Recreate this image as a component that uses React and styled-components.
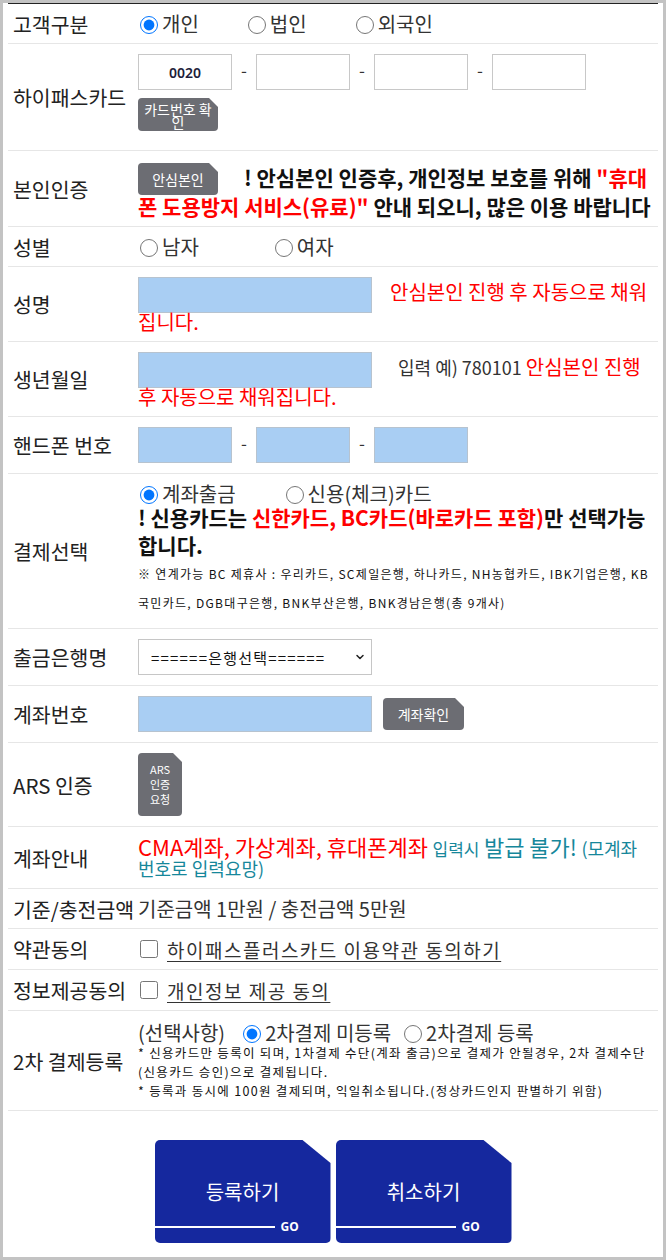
import React from 'react';
import styled, { createGlobalStyle } from 'styled-components';
import { ChevronDown } from 'lucide-react';

const colors = {
  frame: '#c3c3c3',
  rule: '#e6e6e6',
  label: '#222222',
  text: '#333333',
  red: '#ff0000',
  teal: '#16879b',
  field: '#a9cef3',
  fieldBorder: '#b7c3cf',
  gray: '#6c6d73',
  blue: '#15289e',
};

const font = '"Noto Sans CJK KR", "Noto Sans", sans-serif';

const GlobalStyle = createGlobalStyle`
  html, body {
    margin: 0;
    padding: 0;
    background: #fff;
  }

  body {
    font-family: ${font};
    color: ${colors.label};
  }

  *,
  *:before,
  *:after {
    box-sizing: border-box;
  }
`;

const Page = styled.div`
  min-height: 100vh;
  border: 3px solid ${colors.frame};
  padding: 0 5px 14px;
  background: #fff;
`;

const Table = styled.div`
  border-top: 1px solid #222;
`;

const Row = styled.div`
  display: grid;
  grid-template-columns: 125px 1fr;
  border-bottom: 1px solid ${colors.rule};
`;

const Label = styled.div`
  display: flex;
  align-items: center;
  padding-left: 5px;
  font-size: 20.5px;
  line-height: 22px;
  white-space: nowrap;
  color: ${colors.label};
`;

const Cell = styled.div`
  min-width: 0;
  padding: ${p => p.$pad || '10px 3px 10px 5px'};
  font-size: 20px;
  line-height: ${p => p.$lh || '19px'};
  color: ${colors.text};
`;

const Options = styled.div`
  display: flex;
  align-items: center;
  gap: ${p => p.$gap || 47}px;
  height: ${p => p.$h || 19}px;
`;

const Option = styled.label`
  display: inline-flex;
  align-items: center;
  gap: 4px;
  font-size: 20px;
  color: ${colors.text};
  white-space: nowrap;
`;

const Radio = styled.input.attrs({ type: 'radio' })`
  width: 18px;
  height: 18px;
  margin: 3px 0 0 2px;
`;

const FieldLine = styled.div`
  display: flex;
  align-items: center;
`;

const Field = styled.input`
  display: inline-block;
  vertical-align: middle;
  width: ${p => p.$w || 94}px;
  height: 36px;
  margin: 0 ${p => p.$mr || 0}px 0 0;
  padding: 0 6px;
  border: 1px solid ${p => (p.$fill ? colors.fieldBorder : '#c8c8c8')};
  background: ${p => (p.$fill ? colors.field : '#fff')};
  font: 600 14px "Noto Sans", sans-serif;
  color: #1d1d3a;
  text-align: center;
  outline: none;
`;

const Dash = styled.span`
  width: 24px;
  text-align: center;
  font-size: 17px;
  line-height: 16px;
  margin-top: -5px;
  color: ${colors.text};
`;

const GrayButton = styled.button`
  display: inline-flex;
  align-items: center;
  justify-content: center;
  vertical-align: ${p => p.$va || 'middle'};
  width: ${p => p.$w}px;
  height: ${p => p.$h}px;
  margin: ${p => p.$m || 0};
  padding: ${p => p.$pt || 0}px 5px 0;
  border: 0;
  border-radius: 4px;
  background: ${colors.gray};
  color: #fff;
  font-family: ${font};
  font-size: ${p => p.$fs || 14}px;
  line-height: ${p => p.$lh || 14}px;
  text-align: center;
  clip-path: polygon(0 0, calc(100% - 9px) 0, 100% 9px, 100% 100%, 0 100%);
  cursor: pointer;
`;

const Strong = styled.span`
  font-size: 21px;
  font-weight: 700;
  color: #111;
`;

const Notice = styled.p`
  margin: 0;
  font-size: 21px;
  font-weight: 700;
  line-height: 28px;
  color: #111;
`;

const Red = styled.span`
  color: ${colors.red};
  font-size: ${p => (p.$fs ? `${p.$fs}px` : 'inherit')};
`;

const Teal = styled.span`
  color: ${colors.teal};
  font-size: ${p => (p.$fs ? `${p.$fs}px` : 'inherit')};
`;

const Hint = styled.span`
  font-size: 18px;
  color: ${colors.text};
`;

const SmallNote = styled.p`
  margin: 0;
  font-size: ${p => p.$fs || 12}px;
  line-height: ${p => p.$lh}px;
  letter-spacing: 1.3px;
  color: #111;
`;

const SelectWrap = styled.div`
  position: relative;
  width: 234px;
  height: 36px;
`;

const Select = styled.select`
  appearance: none;
  width: 100%;
  height: 100%;
  margin: 0;
  padding: 0 12px;
  border: 1px solid #c6c6c6;
  border-radius: 0;
  background: #fff;
  font-family: ${font};
  font-size: 15px;
  letter-spacing: 1.2px;
  color: #111;
`;

const Chevron = styled(ChevronDown)`
  position: absolute;
  right: 6px;
  top: 50%;
  transform: translateY(-50%);
  pointer-events: none;
  color: #222;
`;

const CheckLine = styled.label`
  display: flex;
  align-items: center;
  gap: 9px;
  height: 20px;
`;

const Check = styled.input.attrs({ type: 'checkbox' })`
  width: 18px;
  height: 18px;
  margin: 0 0 0 2px;
`;

const Terms = styled.a`
  font-size: 19px;
  letter-spacing: 1.5px;
  color: ${colors.text};
  text-decoration: underline;
  text-underline-offset: 3px;
`;

const Prefix = styled.span`
  margin-right: 5px;
  color: ${colors.text};
`;

const Actions = styled.div`
  display: flex;
  justify-content: center;
  gap: 5px;
  margin-top: 29px;
`;

const BigButton = styled.button`
  display: flex;
  flex-direction: column;
  width: 176px;
  height: 103px;
  padding: 40px 0 0;
  border: 0;
  border-radius: 5px;
  background: ${colors.blue};
  color: #fff;
  font-family: ${font};
  clip-path: polygon(0 0, calc(100% - 28px) 0, 100% 23px, 100% 100%, 0 100%);
  cursor: pointer;
`;

const BigTitle = styled.span`
  font-size: 20px;
  line-height: 24px;
  text-align: center;
`;

const GoBar = styled.span`
  display: flex;
  align-items: center;
  margin-top: 17px;
`;

const GoLine = styled.span`
  width: 120px;
  height: 2px;
  background: #fff;
`;

const GoText = styled.span`
  margin-left: 6px;
  font: 700 12px "Noto Sans", sans-serif;
  line-height: 12px;
`;

const App = () => (
  <>
    <GlobalStyle />
    <Page>
      <Table>
        <Row>
          <Label>고객구분</Label>
          <Cell>
            <Options $gap={47}>
              <Option><Radio name="type" defaultChecked />개인</Option>
              <Option><Radio name="type" />법인</Option>
              <Option><Radio name="type" />외국인</Option>
            </Options>
          </Cell>
        </Row>

        <Row>
          <Label>하이패스카드</Label>
          <Cell $pad="10px 3px 19px 5px">
            <FieldLine>
              <Field defaultValue="0020" />
              <Dash>-</Dash>
              <Field />
              <Dash>-</Dash>
              <Field />
              <Dash>-</Dash>
              <Field />
            </FieldLine>
            <GrayButton $w={80} $h={33} $m="8px 0 0" $pt={3} $lh={13}>
              카드번호 확인
            </GrayButton>
          </Cell>
        </Row>

        <Row>
          <Label>본인인증</Label>
          <Cell $pad="12px 3px 5px 5px" $lh="29px">
            <GrayButton $w={80} $h={32} $va="top" $m="0 26px -3px 0">
              안심본인
            </GrayButton>
            <Strong>
              ! 안심본인 인증후, 개인정보 보호를 위해 <Red>"휴대폰 도용방지 서비스(유료)"</Red> 안내 되오니, 많은 이용 바랍니다
            </Strong>
          </Cell>
        </Row>

        <Row>
          <Label>성별</Label>
          <Cell>
            <Options $gap={74}>
              <Option><Radio name="sex" />남자</Option>
              <Option><Radio name="sex" />여자</Option>
            </Options>
          </Cell>
        </Row>

        <Row>
          <Label>성명</Label>
          <Cell $lh="18px">
            <Field $fill $w={234} $mr={18} />
            <Red>안심본인 진행 후 자동으로 채워집니다.</Red>
          </Cell>
        </Row>

        <Row>
          <Label>생년월일</Label>
          <Cell $lh="18px">
            <Field $fill $w={234} $mr={26} />
            <Hint>입력 예) 780101 </Hint>
            <Red>안심본인 진행 후 자동으로 채워집니다.</Red>
          </Cell>
        </Row>

        <Row>
          <Label>핸드폰 번호</Label>
          <Cell>
            <FieldLine>
              <Field $fill />
              <Dash>-</Dash>
              <Field $fill />
              <Dash>-</Dash>
              <Field $fill />
            </FieldLine>
          </Cell>
        </Row>

        <Row>
          <Label>결제선택</Label>
          <Cell $pad="10px 3px 11px 5px">
            <Options $gap={48}>
              <Option><Radio name="pay" defaultChecked />계좌출금</Option>
              <Option><Radio name="pay" />신용(체크)카드</Option>
            </Options>
            <Notice>
              ! 신용카드는 <Red>신한카드, BC카드(바로카드 포함)</Red>만 선택가능합니다.
            </Notice>
            <SmallNote $lh={29}>
              ※ 연계가능 BC 제휴사 : 우리카드, SC제일은행, 하나카드, NH농협카드, IBK기업은행, KB국민카드, DGB대구은행, BNK부산은행, BNK경남은행(총 9개사)
            </SmallNote>
          </Cell>
        </Row>

        <Row>
          <Label>출금은행명</Label>
          <Cell>
            <SelectWrap>
              <Select defaultValue="">
                <option value="">======은행선택======</option>
              </Select>
              <Chevron size={12} strokeWidth={3} />
            </SelectWrap>
          </Cell>
        </Row>

        <Row>
          <Label>계좌번호</Label>
          <Cell>
            <FieldLine>
              <Field $fill $w={234} $mr={11} />
              <GrayButton $w={81} $h={32}>계좌확인</GrayButton>
            </FieldLine>
          </Cell>
        </Row>

        <Row>
          <Label>ARS 인증</Label>
          <Cell>
            <GrayButton $w={44} $h={63} $fs={11} $lh={15}>
              ARS<br />인증<br />요청
            </GrayButton>
          </Cell>
        </Row>

        <Row>
          <Label>계좌안내</Label>
          <Cell $lh="19px">
            <Red $fs={22}>CMA계좌, 가상계좌, 휴대폰계좌</Red> <Teal $fs={17}>입력시</Teal> <Teal $fs={22}>발급 불가!</Teal> <Teal $fs={18}>(모계좌 번호로 입력요망)</Teal>
          </Cell>
        </Row>

        <Row>
          <Label>기준/충전금액</Label>
          <Cell>기준금액 1만원 / 충전금액 5만원</Cell>
        </Row>

        <Row>
          <Label>약관동의</Label>
          <Cell>
            <CheckLine>
              <Check />
              <Terms>하이패스플러스카드 이용약관 동의하기</Terms>
            </CheckLine>
          </Cell>
        </Row>

        <Row>
          <Label>정보제공동의</Label>
          <Cell>
            <CheckLine>
              <Check />
              <Terms>개인정보 제공 동의</Terms>
            </CheckLine>
          </Cell>
        </Row>

        <Row>
          <Label>2차 결제등록</Label>
          <Cell>
            <Options $gap={11} $h={22}>
              <Prefix>(선택사항)</Prefix>
              <Option><Radio name="second" defaultChecked />2차결제 미등록</Option>
              <Option><Radio name="second" />2차결제 등록</Option>
            </Options>
            <SmallNote $lh={19} $fs={12.5}>
              * 신용카드만 등록이 되며, 1차결제 수단(계좌 출금)으로 결제가 안될경우, 2차 결제수단(신용카드 승인)으로 결제됩니다.
            </SmallNote>
            <SmallNote $lh={19} $fs={12.5}>
              * 등록과 동시에 100원 결제되며, 익일취소됩니다.(정상카드인지 판별하기 위함)
            </SmallNote>
          </Cell>
        </Row>
      </Table>

      <Actions>
        <BigButton>
          <BigTitle>등록하기</BigTitle>
          <GoBar>
            <GoLine />
            <GoText>GO</GoText>
          </GoBar>
        </BigButton>
        <BigButton>
          <BigTitle>취소하기</BigTitle>
          <GoBar>
            <GoLine />
            <GoText>GO</GoText>
          </GoBar>
        </BigButton>
      </Actions>
    </Page>
  </>
);

export default App;
